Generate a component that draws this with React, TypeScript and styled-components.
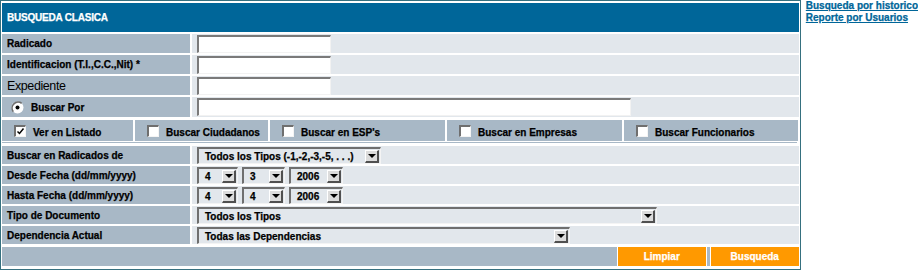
import React from 'react';
import styled, { createGlobalStyle } from 'styled-components';

const GlobalStyle = createGlobalStyle`
    html, body {
        margin: 0;
        padding: 0;
        background: #ffffff;
    }
    body {
        font-family: 'Liberation Sans', Arial, sans-serif;
        color: #000000;
    }
`;

const LABEL_BG = '#a8b8c6';
const VALUE_BG = '#e2e7ec';
const BLUE = '#006699';

const checkCells = [
    { label: 'Ver en Listado', width: 131, checked: true },
    { label: 'Buscar Ciudadanos', width: 133, checked: false },
    { label: "Buscar en ESP's", width: 175, checked: false },
    { label: 'Buscar en Empresas', width: 175, checked: false },
    { label: 'Buscar Funcionarios', width: 174, checked: false },
];

const Radio = () => (
    <RadioIcon width='13' height='13' viewBox='0 0 13 13'>
        <circle cx='6.5' cy='6.5' r='6' fill='#ffffff' />
        <path d='M2.3 10.7 A6 6 0 0 1 10.7 2.3' stroke='#6f6f6f' strokeWidth='1.6' fill='none' />
        <circle cx='6.5' cy='6.5' r='2' fill='#000000' />
    </RadioIcon>
);

const Checkbox: React.FC<{ checked?: boolean }> = ({ checked }) => (
    <CheckBox>
        {checked && (
            <svg width='9' height='9' viewBox='0 0 9 9'>
                <path d='M1.5 4.5 L3.5 6.5 L7.5 1.5' stroke='#000000' strokeWidth='1.5' fill='none' />
            </svg>
        )}
    </CheckBox>
);

const Select: React.FC<{ width: number; value: string }> = ({ width, value }) => (
    <SelectBox $width={width}>
        <span>{value}</span>
        <ArrowButton />
    </SelectBox>
);

const App: React.FC = () => {
    return (
        <Page>
            <GlobalStyle />
            <Panel>
                <Header>BUSQUEDA CLASICA</Header>

                <Row $height={19}>
                    <LabelCell>Radicado</LabelCell>
                    <ValueCell>
                        <TextField $width={134} />
                    </ValueCell>
                </Row>
                <Row $height={19}>
                    <LabelCell>Identificacion (T.I.,C.C.,Nit) *</LabelCell>
                    <ValueCell>
                        <TextField $width={134} />
                    </ValueCell>
                </Row>
                <Row $height={19}>
                    <LabelCell $plain>Expediente</LabelCell>
                    <ValueCell>
                        <TextField $width={134} />
                    </ValueCell>
                </Row>
                <Row $height={20}>
                    <LabelCell $indent={9}>
                        <Radio />
                        <span>Buscar Por</span>
                    </LabelCell>
                    <ValueCell>
                        <TextField $width={434} />
                    </ValueCell>
                </Row>

                <CheckBlock>
                    <CheckCells>
                        {checkCells.map((cell) => (
                            <CheckCell key={cell.label} $width={cell.width}>
                                <Checkbox checked={cell.checked} />
                                <CheckText>{cell.label}</CheckText>
                            </CheckCell>
                        ))}
                    </CheckCells>
                    <CheckRule />
                </CheckBlock>

                <Row $height={18}>
                    <LabelCell>Buscar en Radicados de</LabelCell>
                    <ValueCell>
                        <Select width={184} value='Todos los Tipos (-1,-2,-3,-5, . . .)' />
                    </ValueCell>
                </Row>
                <Row $height={18}>
                    <LabelCell>Desde Fecha (dd/mm/yyyy)</LabelCell>
                    <ValueCell $gap={4}>
                        <Select width={41} value='4' />
                        <Select width={43} value='3' />
                        <Select width={54} value='2006' />
                    </ValueCell>
                </Row>
                <Row $height={18}>
                    <LabelCell>Hasta Fecha (dd/mm/yyyy)</LabelCell>
                    <ValueCell $gap={4}>
                        <Select width={41} value='4' />
                        <Select width={43} value='4' />
                        <Select width={54} value='2006' />
                    </ValueCell>
                </Row>
                <Row $height={18}>
                    <LabelCell>Tipo de Documento</LabelCell>
                    <ValueCell>
                        <Select width={460} value='Todos los Tipos' />
                    </ValueCell>
                </Row>
                <Row $height={18}>
                    <LabelCell>Dependencia Actual</LabelCell>
                    <ValueCell>
                        <Select width={373} value='Todas las Dependencias' />
                    </ValueCell>
                </Row>

                <ButtonRow>
                    <ButtonFiller />
                    <OrangeButton>Limpiar</OrangeButton>
                    <ButtonDivider />
                    <OrangeButton>Busqueda</OrangeButton>
                </ButtonRow>
            </Panel>

            <Links>
                <LinkItem href='#'>Busqueda por historico</LinkItem>
                <LinkItem href='#'>Reporte por Usuarios</LinkItem>
            </Links>
        </Page>
    );
};

const Page = styled.div`
    display: flex;
    align-items: flex-start;
    gap: 5px;
    width: 918px;
    height: 270px;
    overflow: hidden;
    -webkit-text-stroke: 0.25px currentColor;
`;

const Panel = styled.div`
    width: 798px;
    border: 1px solid #35707f;
    padding: 2px 1px 3px 1px;
    display: flex;
    flex-direction: column;
    gap: 2px;
    background: #ffffff;
`;

const Header = styled.div`
    height: 29px;
    background: ${BLUE};
    color: #ffffff;
    font-weight: bold;
    font-size: 10px;
    letter-spacing: -0.2px;
    display: flex;
    align-items: center;
    padding-left: 5px;
`;

const Row = styled.div<{ $height: number }>`
    display: grid;
    grid-template-columns: 188px 1fr;
    column-gap: 2px;
    height: ${(p) => p.$height}px;
`;

const LabelCell = styled.div<{ $plain?: boolean; $indent?: number }>`
    background: ${LABEL_BG};
    display: flex;
    align-items: center;
    gap: 7px;
    padding-left: ${(p) => p.$indent ?? 5}px;
    font-size: ${(p) => (p.$plain ? '12.5px' : '10px')};
    font-weight: ${(p) => (p.$plain ? 'normal' : 'bold')};
    letter-spacing: ${(p) => (p.$plain ? '-0.4px' : '0')};
    -webkit-text-stroke: ${(p) => (p.$plain ? '0' : '0.25px currentColor')};
    white-space: nowrap;
`;

const ValueCell = styled.div<{ $gap?: number }>`
    background: ${VALUE_BG};
    display: flex;
    align-items: flex-start;
    gap: ${(p) => p.$gap ?? 0}px;
    padding: 1px 0 0 5px;
`;

const TextField = styled.input.attrs({ type: 'text', readOnly: true })<{ $width: number }>`
    box-sizing: border-box;
    width: ${(p) => p.$width}px;
    height: 18px;
    margin: 0;
    padding: 0 3px;
    background: #ffffff;
    border-top: 2px solid #7a7a7a;
    border-left: 2px solid #7a7a7a;
    border-right: 1px solid #f2f2f2;
    border-bottom: 1px solid #f2f2f2;
    outline: none;
    font-family: 'Liberation Sans', Arial, sans-serif;
    font-size: 11px;
`;

const RadioIcon = styled.svg`
    flex-shrink: 0;
`;

const CheckBlock = styled.div`
    padding: 1px 0 1px 0;
    height: 23px;
    background: #ffffff;
`;

const CheckCells = styled.div`
    display: flex;
    gap: 2px;
    height: 21px;
    margin-bottom: 1px;
`;

const CheckRule = styled.div`
    height: 1px;
    margin-right: 2px;
    background: ${LABEL_BG};
`;

const CheckCell = styled.div<{ $width: number }>`
    width: ${(p) => p.$width}px;
    background: ${LABEL_BG};
    display: flex;
    align-items: center;
    gap: 7px;
    padding-left: 12px;
    box-sizing: border-box;
    font-size: 10px;
    font-weight: bold;
    white-space: nowrap;
`;

const CheckBox = styled.span`
    box-sizing: border-box;
    width: 12px;
    height: 12px;
    background: #ffffff;
    border-top: 2px solid #6f6f6f;
    border-left: 2px solid #6f6f6f;
    border-right: 1px solid #f4f4f4;
    border-bottom: 1px solid #f4f4f4;
    display: flex;
    align-items: center;
    justify-content: center;
    flex-shrink: 0;
`;

const CheckText = styled.span`
    padding-top: 4px;
`;

const SelectBox = styled.div<{ $width: number }>`
    box-sizing: border-box;
    width: ${(p) => p.$width}px;
    height: 17px;
    background: ${VALUE_BG};
    border-top: 2px solid #6f6f6f;
    border-left: 2px solid #6f6f6f;
    border-right: 1px solid #f4f4f4;
    border-bottom: 1px solid #f4f4f4;
    display: flex;
    align-items: center;
    justify-content: space-between;
    padding: 0 1px 0 6px;
    font-size: 10px;
    font-weight: bold;
    white-space: nowrap;
`;

const ArrowButton = styled.span`
    position: relative;
    box-sizing: border-box;
    width: 14px;
    height: 13px;
    margin-top: 1px;
    background: #dcdcdc;
    border-top: 1px solid #ffffff;
    border-left: 1px solid #ffffff;
    border-right: 2px solid #505050;
    border-bottom: 2px solid #505050;
    flex-shrink: 0;
    -webkit-text-stroke: 0;

    &::after {
        content: '';
        position: absolute;
        left: 2px;
        top: 3px;
        border-left: 4px solid transparent;
        border-right: 4px solid transparent;
        border-top: 4px solid #000000;
    }
`;

const ButtonRow = styled.div`
    display: flex;
    gap: 1px;
    height: 19px;
    margin-top: 1px;
`;

const ButtonFiller = styled.div`
    flex: 1;
    background: ${LABEL_BG};
`;

const ButtonDivider = styled.div`
    width: 3px;
    background: ${LABEL_BG};
`;

const OrangeButton = styled.div`
    width: 88px;
    background: #ff9900;
    color: #ffffff;
    font-size: 10px;
    font-weight: bold;
    display: flex;
    align-items: center;
    justify-content: center;
`;

const Links = styled.div`
    display: flex;
    flex-direction: column;
    padding-top: 0;
`;

const LinkItem = styled.a`
    color: ${BLUE};
    font-size: 10px;
    font-weight: bold;
    line-height: 12px;
    text-decoration: underline;
    white-space: nowrap;
`;

export default App;
